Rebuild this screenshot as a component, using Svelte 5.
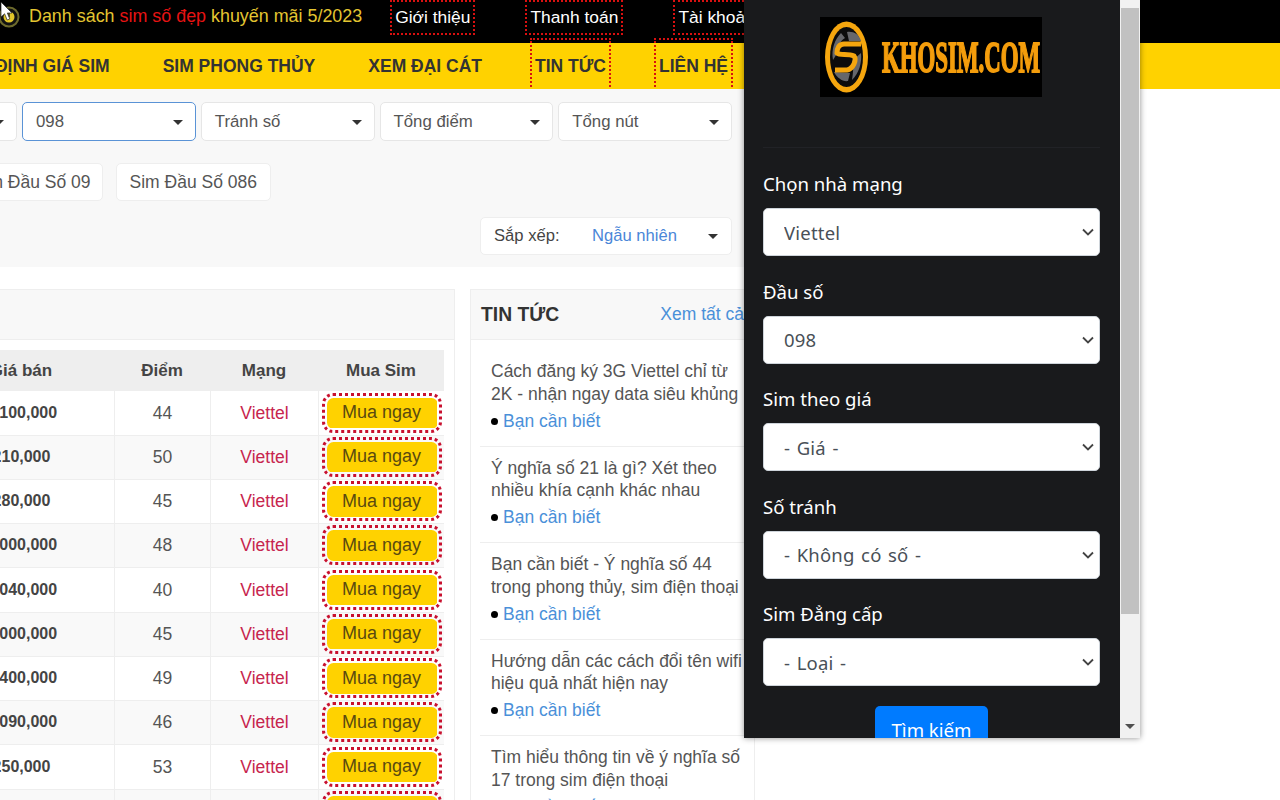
<script>
    const topLinks = ['Giới thiệu', 'Thanh toán', 'Tài khoản'];
    const navLinks = [
        { text: 'ĐỊNH GIÁ SIM' },
        { text: 'SIM PHONG THỦY' },
        { text: 'XEM ĐẠI CÁT' },
        { text: 'TIN TỨC', dotted: true },
        { text: 'LIÊN HỆ', dotted: true }
    ];
    const filters = [
        { text: 'Sim theo giá' },
        { text: '098', active: true },
        { text: 'Tránh số' },
        { text: 'Tổng điểm' },
        { text: 'Tổng nút' }
    ];
    const rows = [
        { price: '1,100,000', score: 44 },
        { price: '210,000', score: 50 },
        { price: '280,000', score: 45 },
        { price: '1,000,000', score: 48 },
        { price: '1,040,000', score: 40 },
        { price: '1,000,000', score: 45 },
        { price: '1,400,000', score: 49 },
        { price: '1,090,000', score: 46 },
        { price: '250,000', score: 53 },
        { price: '500,000', score: 47 }
    ];
    const news = [
        'Cách đăng ký 3G Viettel chỉ từ 2K - nhận ngay data siêu khủng',
        'Ý nghĩa số 21 là gì? Xét theo nhiều khía cạnh khác nhau',
        'Bạn cần biết - Ý nghĩa số 44 trong phong thủy, sim điện thoại',
        'Hướng dẫn các cách đổi tên wifi hiệu quả nhất hiện nay',
        'Tìm hiểu thông tin về ý nghĩa số 17 trong sim điện thoại'
    ];
    const searchFields = [
        { label: 'Chọn nhà mạng', value: 'Viettel' },
        { label: 'Đầu số', value: '098' },
        { label: 'Sim theo giá', value: '- Giá -' },
        { label: 'Số tránh', value: '- Không có số -' },
        { label: 'Sim Đẳng cấp', value: '- Loại -' }
    ];
</script>

<div class="page">
    <header class="topbar">
        <svg class="clock" viewBox="0 0 22 22" width="22" height="22">
            <circle cx="11" cy="11" r="9.5" fill="#111" stroke="#6d6a2c" stroke-width="2" />
            <circle cx="11" cy="11" r="5.5" fill="#e2c62a" />
            <path d="M11 6.5V11" stroke="#222" stroke-width="1.4" />
        </svg>
        <p class="notice">Danh sách <b>sim số đẹp</b> khuyến mãi 5/2023</p>
        <nav class="top-links">
            {#each topLinks as link}
                <a href="#top">{link}</a>
            {/each}
        </nav>
    </header>

    <nav class="mainnav">
        <div class="mainnav-inner">
            {#each navLinks as item}
                <a href="#top" class:dotted={item.dotted}>{item.text}</a>
            {/each}
        </div>
    </nav>

    <section class="filters">
        <div class="filter-row">
            {#each filters as f}
                <div class="fake-select" class:active={f.active}>
                    <span>{f.text}</span>
                    <i class="caret"></i>
                </div>
            {/each}
        </div>
        <div class="chip-row">
            <a href="#top" class="chip">Sim Đầu Số 09</a>
            <a href="#top" class="chip">Sim Đầu Số 086</a>
        </div>
        <div class="sort-row">
            <div class="sort">
                <span class="sort-label">Sắp xếp:</span>
                <span class="sort-value">Ngẫu nhiên</span>
                <i class="caret"></i>
            </div>
        </div>
    </section>

    <main class="columns">
        <section class="panel table-panel">
            <div class="panel-head"></div>
            <div class="table-wrap">
                <div class="tr th">
                    <div class="price-col">Giá bán</div>
                    <div>Điểm</div>
                    <div>Mạng</div>
                    <div>Mua Sim</div>
                </div>
                {#each rows as row, i}
                    <div class="tr" class:odd={i % 2 === 1}>
                        <div class="price price-col">{row.price}</div>
                        <div class="score">{row.score}</div>
                        <div class="net">Viettel</div>
                        <div class="buy"><a href="#top">Mua ngay</a></div>
                    </div>
                {/each}
            </div>
        </section>

        <aside class="panel news-panel">
            <div class="panel-head news-head">
                <h2>TIN TỨC</h2>
                <a href="#top">Xem tất cả</a>
            </div>
            <ul class="news">
                {#each news as title}
                    <li>
                        <p>{title}</p>
                        <div class="cat"><i></i><a href="#top">Bạn cần biết</a></div>
                    </li>
                {/each}
            </ul>
        </aside>
    </main>

    <div class="search-window">
        <div class="search-body">
            <svg class="logo" viewBox="0 0 222 80" width="222" height="80">
                <rect width="222" height="80" fill="#000" />
                <ellipse cx="26.5" cy="40" rx="21.5" ry="35.5" fill="#f5a60e" />
                <ellipse cx="26.5" cy="40" rx="16.5" ry="30" fill="#0c0c0c" />
                <path d="M27 15C33 14 39 17 41 24L29 24Z" fill="#66676b" />
                <path d="M21 16C15 22 11 32 13 43L18 35C18 29 20 24 25 21Z" fill="#66676b" />
                <path d="M41 36C42 46 39 56 32 63C33 56 34 50 32 44Z" fill="#66676b" />
                <path d="M14 55C17 61 23 65 28 64L30 56Z" fill="#66676b" />
                <path d="M41 27H24C19 27 17 31 17 36C20 39 28 36 34 39C37 43 33 52 27 53H15" fill="none" stroke="#f5a60e" stroke-width="5" />
                <text x="62" y="55" textLength="158" lengthAdjust="spacingAndGlyphs" class="logo-text">KHOSIM.COM</text>
            </svg>
            <hr />
            <form>
                {#each searchFields as field}
                    <label>
                        <span>{field.label}</span>
                        <select>
                            <option>{field.value}</option>
                        </select>
                    </label>
                {/each}
                <button type="button">Tìm kiếm</button>
            </form>
        </div>
        <div class="scrollbar">
            <div class="thumb"></div>
            <i class="arrow-down"></i>
        </div>
    </div>

    <svg class="cursor" viewBox="0 0 14 22" width="14" height="22">
        <path d="M1 2V17L4.6 13.8L7.2 20L9.8 18.9L7.3 13H12Z" fill="#fff" stroke="#222" stroke-width=".7" />
    </svg>
</div>

<style>
    :global(body) {
        font-family: "Liberation Sans", Arial, sans-serif;
        font-size: 16px;
        line-height: 1.42857;
        color: #555;
        background: #fff;
    }

    a {
        text-decoration: none;
        color: inherit;
    }

    i {
        display: block;
    }

    .page {
        position: relative;
        width: 1280px;
        height: 800px;
        overflow: hidden;
    }

    /* top black strip */
    .topbar {
        display: flex;
        align-items: flex-start;
        height: 43px;
        background: #000;
    }

    .clock {
        flex: none;
        margin: 6px 0 0 -2px;
    }

    .notice {
        margin: 4px 0 0 9px;
        font-size: 17.9px;
        color: #e4c531;
        white-space: nowrap;
    }

    .notice b {
        font-weight: inherit;
        color: #e61313;
    }

    .top-links {
        display: flex;
        gap: 50px;
        margin-left: 28px;
    }

    .top-links a {
        height: 35px;
        padding: 3px 3px 0;
        border: 2px dotted #d81010;
        color: #fff;
        font-size: 17.4px;
        white-space: nowrap;
        box-sizing: border-box;
    }

    /* yellow menu */
    .mainnav {
        display: flex;
        height: 46px;
        background: #ffd200;
    }

    .mainnav-inner {
        display: flex;
        justify-content: flex-end;
        gap: 43px;
        width: 733px;
        height: 49px;
        margin-top: -5px;
        position: relative;
    }

    .mainnav-inner a {
        flex: none;
        box-sizing: border-box;
        padding: 14px 3px 0;
        border: 2px dotted transparent;
        border-bottom: none;
        font-size: 17.5px;
        font-weight: 700;
        color: #333;
        white-space: nowrap;
    }

    .mainnav-inner a.dotted {
        border-color: #d81010;
    }

    /* gray filter area */
    .filters {
        width: 744px;
        height: 178px;
        box-sizing: border-box;
        padding: 13px 12px 0 0;
        background: #f8f8f8;
    }

    .filter-row,
    .chip-row,
    .sort-row {
        display: flex;
        justify-content: flex-end;
    }

    .filter-row {
        gap: 5px;
        font-size: 16.8px;
    }

    .fake-select {
        flex: none;
        display: flex;
        align-items: center;
        justify-content: space-between;
        width: 173.75px;
        height: 39px;
        box-sizing: border-box;
        padding: 1px 12px 0 13px;
        background: #fff;
        border: 1px solid #e6e6e6;
        border-radius: 5px;
    }

    .fake-select.active {
        border-color: #5a93d6;
    }

    .caret {
        width: 0;
        height: 0;
        border-left: 5px solid transparent;
        border-right: 5px solid transparent;
        border-top: 5px solid #333;
    }

    .chip-row {
        gap: 13px;
        width: 271px;
        margin-top: 22px;
        font-size: 17.5px;
    }

    .chip {
        flex: none;
        height: 38px;
        box-sizing: border-box;
        padding: 6px 13px 0;
        background: #fff;
        border: 1px solid #eee;
        border-radius: 5px;
        white-space: nowrap;
    }

    .chip:first-child {
        padding-right: 11px;
    }

    .sort-row {
        margin-top: 16px;
        font-size: 16.6px;
    }

    .sort {
        display: flex;
        align-items: center;
        width: 252px;
        height: 38px;
        box-sizing: border-box;
        padding: 0 13px;
        background: #fff;
        border: 1px solid #eee;
        border-radius: 5px;
    }

    .sort-label {
        width: 98px;
        color: #444;
    }

    .sort-value {
        flex: 1;
        color: #4a86d8;
    }

    /* table and news */
    .columns {
        display: flex;
        justify-content: flex-end;
        gap: 15px;
        width: 755px;
        margin-top: 22px;
    }

    .panel {
        flex: none;
        height: 520px;
        box-sizing: border-box;
        border: 1px solid #eee;
        overflow: hidden;
    }

    .panel-head {
        height: 49px;
        background: #f8f8f8;
        border-bottom: 1px solid #eee;
    }

    .table-panel {
        width: 536px;
    }

    .table-wrap {
        padding: 10px 10px 0;
    }

    .tr {
        display: grid;
        grid-template-columns: 184px 96px 108px 126px;
        height: 44.25px;
        text-align: center;
        box-sizing: border-box;
        border-bottom: 1px solid #eee;
    }

    .tr > div {
        display: flex;
        align-items: center;
        justify-content: center;
        border-left: 1px solid #eee;
    }

    .tr > .price-col {
        padding-right: 2px;
    }

    .tr.odd {
        background: #f9f9f9;
    }

    .th {
        height: 41.4px;
        background: #eee;
        border: none;
        font-size: 17px;
        font-weight: 700;
        color: #444;
    }

    .th > div {
        border: none;
    }

    .price {
        font-weight: 700;
        color: #444;
    }

    .score {
        font-size: 17.5px;
    }

    .net {
        color: #c7254e;
        font-size: 17.5px;
    }

    .buy a {
        display: block;
        width: 120px;
        height: 40px;
        box-sizing: border-box;
        padding: 1.5px;
        border: 3px dotted #c8102e;
        border-radius: 11px;
        margin-bottom: 1px;
        background: linear-gradient(#ffd200, #ffd200) content-box;
        color: #5a4a10;
        font-size: 18px;
        line-height: 31px;
    }

    .news-panel {
        width: 285px;
    }

    .news-head {
        display: flex;
        justify-content: space-between;
        align-items: center;
        padding: 0 10px 0 10px;
    }

    .news-head h2 {
        margin: 0;
        font-size: 19.3px;
        font-weight: 700;
        color: #333;
    }

    .news-head a {
        color: #4a90d9;
        font-size: 17.5px;
        white-space: nowrap;
    }

    .news {
        list-style: none;
        margin: 0;
        padding: 10px 10px 0 9px;
        font-size: 17.5px;
    }

    .news li {
        height: 96.5px;
        box-sizing: border-box;
        padding: 10px 0 0 11px;
        border-bottom: 1px solid #eee;
    }

    .news p {
        margin: 0;
        line-height: 22.86px;
    }

    .cat {
        display: flex;
        align-items: center;
        margin-top: 4px;
        line-height: 22.86px;
    }

    .cat i {
        width: 7px;
        height: 7px;
        margin-right: 5px;
        background: #000;
        border-radius: 50%;
    }

    .cat a {
        color: #4a90d9;
    }

    /* floating search window */
    .search-window {
        position: absolute;
        left: 744px;
        top: 0;
        display: flex;
        width: 396px;
        height: 738px;
        background: #191a1c;
        box-shadow: 0 0 6px rgba(0, 0, 0, 0.45);
        overflow: hidden;
        font-family: "Noto Sans", "Open Sans", sans-serif;
    }

    .search-body {
        flex: 1;
        padding: 17px 20px 0 19px;
        text-align: center;
    }

    .logo {
        display: block;
        margin-left: 57px;
        filter: blur(0.7px);
    }

    .logo-text {
        font-family: "Liberation Serif", serif;
        font-weight: 700;
        font-size: 44px;
        fill: #f49d0c;
        stroke: #f49d0c;
        stroke-width: 1.8px;
    }

    hr {
        margin: 50px 0 0;
        border: none;
        border-top: 1px solid #212226;
    }

    form {
        padding-top: 21px;
    }

    label {
        display: block;
        margin-bottom: 20.5px;
        text-align: left;
    }

    label span {
        display: block;
        height: 39px;
        font-size: 18.6px;
        line-height: 30px;
        color: #fff;
    }

    select {
        display: block;
        width: 100%;
        height: 48px;
        padding: 0 30px 0 20px;
        appearance: none;
        background: #fff url("data:image/svg+xml,%3csvg xmlns='http://www.w3.org/2000/svg' viewBox='0 0 12 8'%3e%3cpath d='M1 1.5l5 5 5-5' fill='none' stroke='%23444' stroke-width='1.8'/%3e%3c/svg%3e") no-repeat right 5px center / 12px 8px;
        border: 1px solid #ced4da;
        border-radius: 5px;
        font-family: inherit;
        font-size: 18.5px;
        letter-spacing: 0.2px;
        word-spacing: 1.5px;
        color: #495057;
    }

    button {
        display: block;
        width: 113px;
        height: 48px;
        margin: -1px auto 0;
        padding: 0;
        background: #007bff;
        border: none;
        border-radius: 5px;
        font-family: inherit;
        font-size: 18.6px;
        color: #fff;
    }

    .scrollbar {
        position: relative;
        flex: none;
        width: 20px;
        background: #f1f1f1;
    }

    .thumb {
        width: 18px;
        height: 606px;
        margin: 8px 1px 0;
        background: #c1c1c1;
    }

    .arrow-down {
        position: absolute;
        left: 5px;
        bottom: 9px;
        width: 0;
        height: 0;
        border-left: 5px solid transparent;
        border-right: 5px solid transparent;
        border-top: 5px solid #505050;
    }

    .cursor {
        position: absolute;
        left: 0;
        top: 0;
    }
</style>
